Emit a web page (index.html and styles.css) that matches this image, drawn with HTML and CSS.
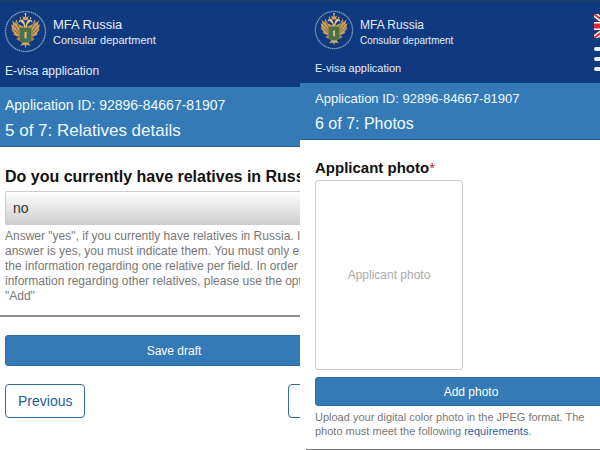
FILE: index.html
```html
<!DOCTYPE html>
<html lang="en">
<head>
    <meta charset="UTF-8">
    <meta name="viewport" content="width=device-width, initial-scale=1.0">
    <title>E-visa application</title>
    <link rel="stylesheet" href="styles.css">
</head>
<body>
    <svg class="symbols" aria-hidden="true">
        <symbol id="emblem" viewBox="0 0 42 42">
            <circle cx="21" cy="21" r="19.5" fill="none" stroke="#7f9fb4" stroke-width="1.3" stroke-dasharray="1.6 0.5"/>
            <path d="M19 16 L14 14 L12 9 L11 13 L8 10 L9 15 L7 14 L8 19 L7 19 L10 23 L9 24 L13 26 L17 26 Z" fill="#c99f62"/>
            <path d="M23 16 L28 14 L30 9 L31 13 L34 10 L33 15 L35 14 L34 19 L35 19 L32 23 L33 24 L29 26 L25 26 Z" fill="#c99f62"/>
            <path d="M10 15 L15 22 M9 19 L15 24 M12 12 L16 19 M32 15 L27 22 M33 19 L27 24 M30 12 L26 19" stroke="#72552b" stroke-width="0.8"/>
            <path d="M20 19 L19 14 L16 11 L14 13 L15 10 L18 9 L20 12 L21 16 L22 12 L24 9 L27 10 L28 13 L26 11 L23 14 L22 19 Z" fill="#e5c68c"/>
            <path d="M19 10 L18 6 L20 7 L21 5 L22 7 L24 6 L23 10 Z" fill="#d7a14f"/>
            <path d="M21 3 V6 M20 4 H22 M16 7 V9 M26 7 V9" stroke="#e5c283"/>
            <path d="M17 25 L12 28 L14 30 L19 29 M25 25 L30 28 L28 30 L23 29" fill="#b58447"/>
            <path d="M15 17 H27 V29 L24 32 H18 L15 29 Z" fill="#4c7047" stroke="#a78b4b" stroke-width="0.8"/>
            <path d="M20 22 L22 21 L22 28 L20 27 Z" fill="#d1c790"/>
            <path d="M18 32 H24 L26 35 L22 34 L21 37 L20 34 L16 35 Z" fill="#d1a870"/>
        </symbol>
    </svg>

    <main class="screens">
        <section class="screen relatives">
            <div class="page">
                <header class="topbar">
                    <div>
                        <div class="brand">
                            <svg class="emblem" role="img" aria-label="MFA emblem"><use href="#emblem"/></svg>
                            <div>
                                <div class="brandName">MFA Russia</div>
                                <div class="brandDept">Consular department</div>
                            </div>
                        </div>
                        <div class="appName">E-visa application</div>
                    </div>
                </header>
                <div class="stepbar">
                    <div class="appId">Application ID: 92896-84667-81907</div>
                    <h1>5 of 7: Relatives details</h1>
                </div>
                <form class="content">
                    <label for="hasRelatives">Do you currently have relatives in Russia?</label>
                    <select id="hasRelatives">
                        <option>no</option>
                        <option>yes</option>
                    </select>
                    <p class="hint">Answer "yes", if you currently have relatives in Russia. If the<br>answer is yes, you must indicate them. You must only enter<br>the information regarding one relative per field. In order to add<br>information regarding other relatives, please use the option<br>"Add"</p>
                </form>
                <div class="actions">
                    <button type="button" class="primary">Save draft</button>
                    <div class="pager">
                        <button type="button" class="outline">Previous</button>
                        <button type="button" class="outline">Next</button>
                    </div>
                </div>
            </div>
        </section>

        <section class="screen photos">
            <div class="page">
                <header class="topbar">
                    <div>
                        <div class="brand">
                            <svg class="emblem" role="img" aria-label="MFA emblem"><use href="#emblem"/></svg>
                            <div>
                                <div class="brandName">MFA Russia</div>
                                <div class="brandDept">Consular department</div>
                            </div>
                        </div>
                        <div class="appName">E-visa application</div>
                    </div>
                    <div class="tools">
                        <button type="button" class="tool" aria-label="Language">
                            <svg width="32" height="24" viewBox="0 0 32 24">
                                <path d="M0 0H32V24H0Z" fill="#23386f"/>
                                <path d="M0 0L32 24M32 0L0 24" stroke="#fff" stroke-width="5"/>
                                <path d="M0 0L32 24M32 0L0 24" stroke="#d32a3c" stroke-width="2"/>
                                <path d="M16 0V24M0 12H32" stroke="#fff" stroke-width="8"/>
                                <path d="M16 0V24M0 12H32" stroke="#d32a3c" stroke-width="5"/>
                            </svg>
                        </button>
                        <button type="button" class="tool" aria-label="Menu">
                            <svg width="32" height="24" viewBox="0 0 32 24">
                                <path d="M2 2H30M2 12H30M2 22H30" stroke="#e9f2fb" stroke-width="4" stroke-linecap="round"/>
                            </svg>
                        </button>
                    </div>
                </header>
                <div class="stepbar">
                    <div class="appId">Application ID: 92896-84667-81907</div>
                    <h1>6 of 7: Photos</h1>
                </div>
                <form class="content">
                    <label for="addPhoto">Applicant photo<span class="required">*</span></label>
                    <div class="photoBox">Applicant photo</div>
                    <button type="button" class="primary" id="addPhoto">Add photo</button>
                    <p class="hint">Upload your digital color photo in the JPEG format. The<br>photo must meet the following <a href="#requirements">requirements</a>.</p>
                </form>
                <hr>
            </div>
        </section>
    </main>
</body>
</html>
```
FILE: styles.css
```css
* {
    margin: 0;
    padding: 0;
    box-sizing: border-box;
}
body {
    font-family: "Liberation Sans", Arial, sans-serif;
    background-color: #fff;
    color: #111;
    overflow-x: hidden;
}
button, select {
    font-family: inherit;
}
.symbols {
    display: none;
}
.screens {
    display: grid;
    grid-template-columns: 1fr 1fr;
}
/* each page is wider than its column and runs off the edge */
.screen {
    min-width: 0;
    overflow: hidden;
}
.relatives .page {
    width: 116%;
}
.photos .page {
    width: 110%;
}

/* header */
.topbar {
    display: flex;
    justify-content: space-between;
    height: 87px;
    padding: 8px 4px 0;
    background-color: #103a80;
    border-top: 2px solid #16406a;
    color: #e2edfa;
}
.brand {
    display: flex;
    gap: 6px;
}
.emblem {
    width: 43px;
    height: 43px;
}
.brandName {
    margin-top: 7px;
    font-size: 13px;
    line-height: 16px;
}
.brandDept {
    font-size: 11px;
    line-height: 15px;
}
.appName {
    margin-top: 10px;
    padding-left: 1px;
    font-size: 12px;
    line-height: 16px;
}
.stepbar {
    height: 60px;
    padding: 9px 5px 0;
    background-color: #337ab7;
    border-bottom: 1px solid #286096;
    color: #f2faff;
}
.appId {
    font-size: 14px;
    line-height: 18px;
}
h1 {
    margin-top: 7px;
    font-size: 17px;
    font-weight: normal;
    line-height: 20px;
}
.tools {
    display: flex;
    flex-direction: column;
    gap: 9px;
    margin-top: 4px;
}
.tool {
    height: 24px;
    background: none;
    border: none;
    cursor: pointer;
}
.tool svg {
    display: block;
}

/* form */
.content {
    padding: 20px 5px 0;
}
label {
    display: block;
    font-size: 16px;
    font-weight: bold;
    line-height: 20px;
    white-space: nowrap;
}
select {
    appearance: none;
    display: block;
    width: 100%;
    height: 34px;
    margin-top: 4px;
    padding: 0 7px;
    background: linear-gradient(#fff, #cecece);
    border: 1px solid #ccc;
    border-radius: 2px;
    color: #333;
    font-size: 14px;
}
.hint {
    margin-top: 4px;
    color: #777;
    font-size: 12px;
    line-height: 15px;
    white-space: nowrap;
}
.hint a {
    color: #1f5f9e;
    text-decoration: none;
}
.required {
    color: #b52b2b;
    font-weight: normal;
}
.primary {
    display: block;
    width: 100%;
    height: 31px;
    background-color: #337ab7;
    border: 1px solid #2e6da4;
    border-radius: 3px;
    color: #fff;
    font-size: 12px;
    cursor: pointer;
}
.actions {
    margin-top: 11px;
    padding: 18px 5px 0;
    border-top: 2px solid #8e8e8e;
}
.pager {
    display: flex;
    justify-content: space-between;
    margin-top: 18px;
}
.outline {
    height: 34px;
    padding: 0 12px;
    background-color: #fff;
    border: 1px solid #2e6da4;
    border-radius: 4px;
    color: #22609c;
    font-size: 14px;
    cursor: pointer;
}

/* photos page is shown a little smaller */
.photos .topbar {
    height: 83px;
    padding: 8px 4px 0 14px;
}
.photos .emblem {
    width: 40px;
    height: 40px;
}
.photos .brandName {
    font-size: 12px;
}
.photos .brandDept {
    font-size: 10px;
}
.photos .appName {
    font-size: 11px;
}
.photos .stepbar {
    height: 57px;
    padding: 7px 15px 0;
}
.photos .appId {
    font-size: 13px;
}
.photos h1 {
    margin-top: 6px;
    font-size: 16px;
}
.photos .content {
    padding: 18px 3px 0 15px;
}
.photos label {
    font-size: 15px;
}
.photoBox {
    display: flex;
    align-items: center;
    justify-content: center;
    width: 148px;
    height: 190px;
    margin: 2px 0 7px;
    border: 1px solid #ccc;
    border-radius: 3px;
    color: #aaa;
    font-size: 12px;
}
.photos .primary {
    height: 29px;
}
.photos .hint {
    font-size: 11px;
    line-height: 14px;
}
hr {
    margin: 11px 0 0 6px;
    border: none;
    border-top: 1px solid #777;
}
```
